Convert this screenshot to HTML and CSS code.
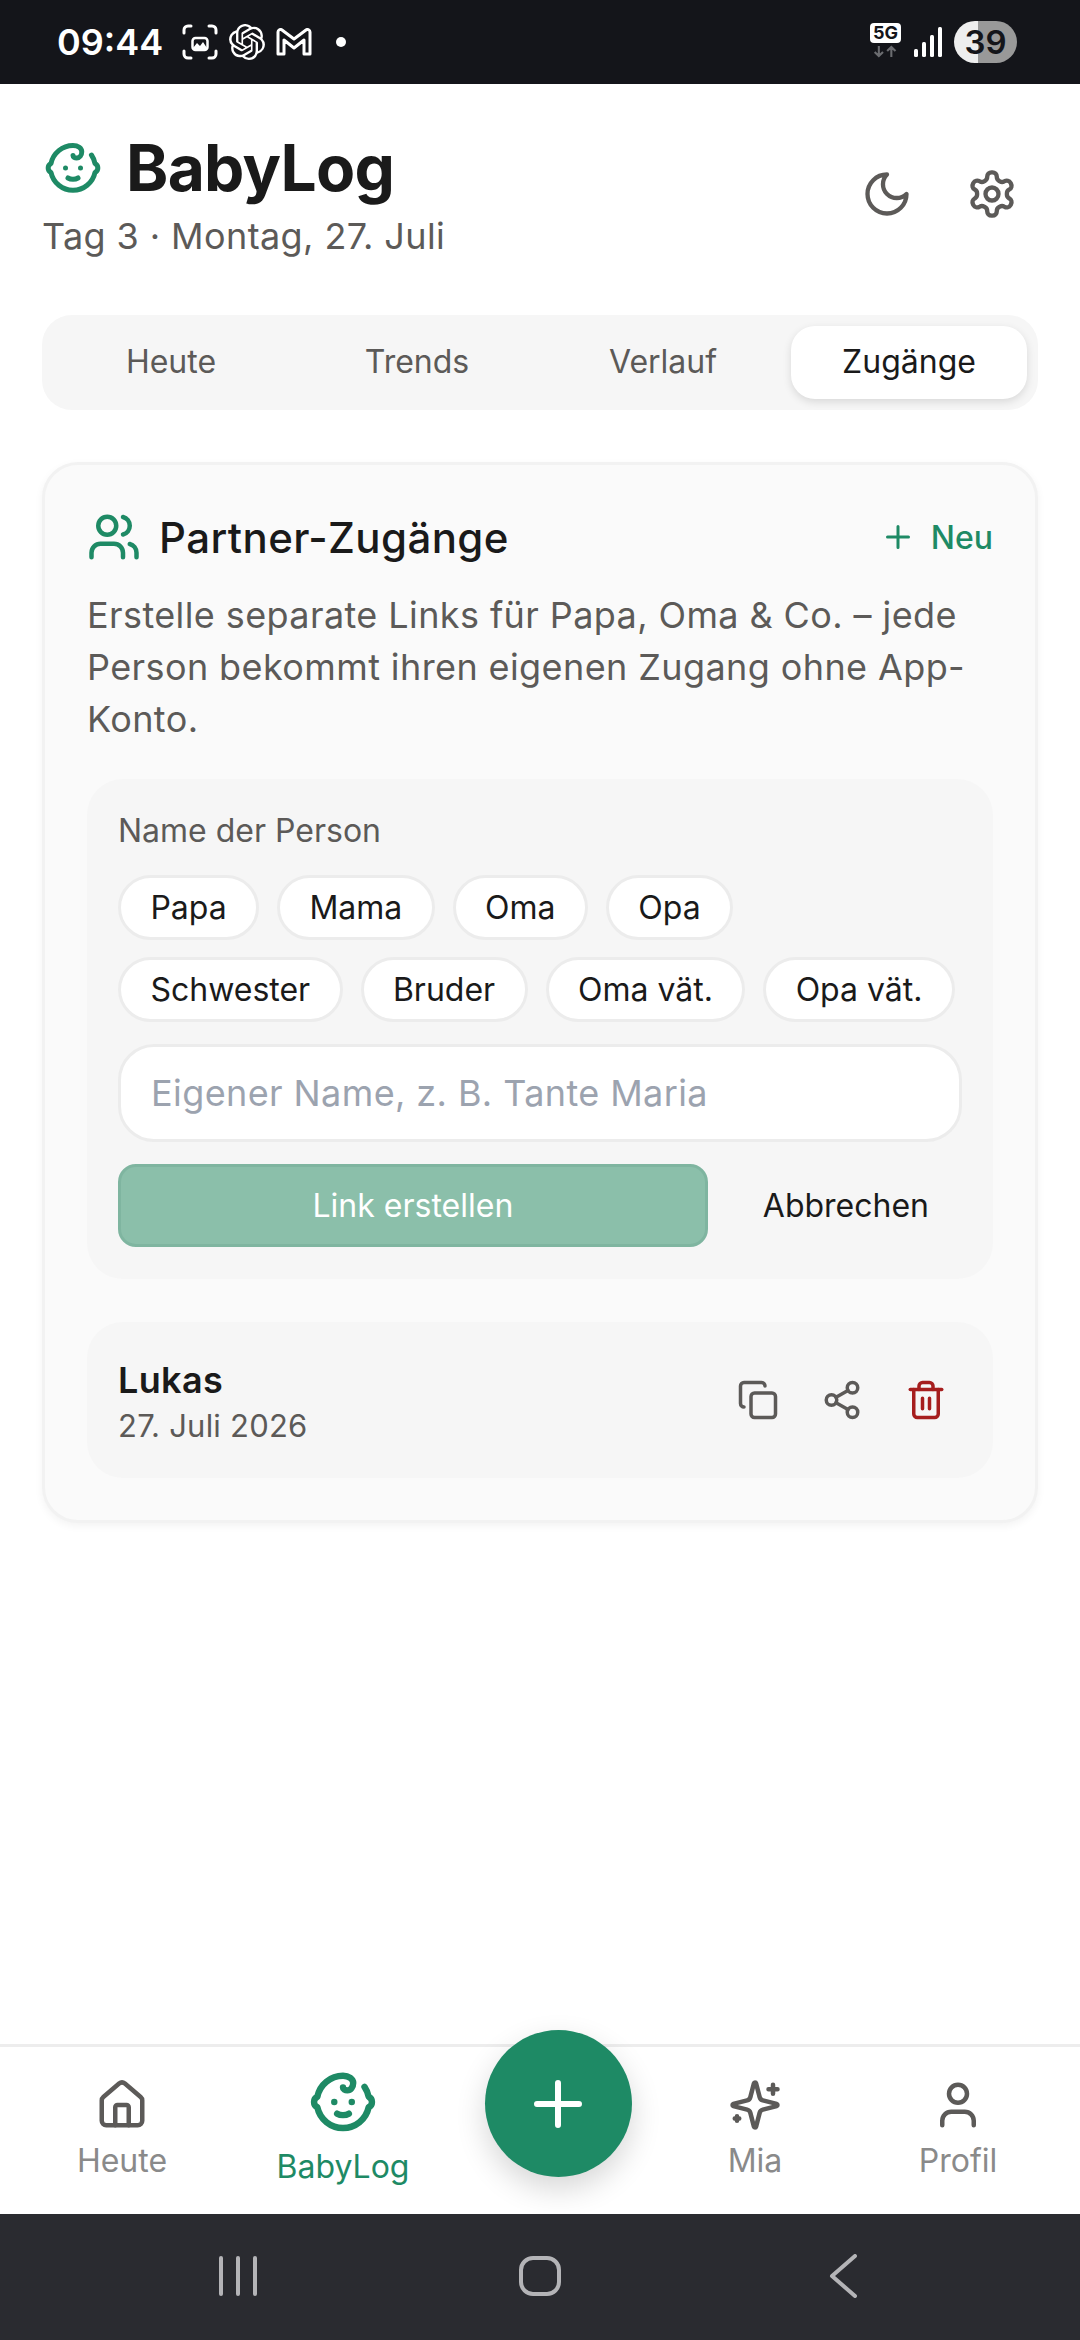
FILE: index.html
```html
<!DOCTYPE html>
<html lang="de">

<head>
    <meta charset="UTF-8">
    <meta name="viewport" content="width=device-width, initial-scale=1.0">
    <title>BabyLog</title>
    <link rel="stylesheet" href="styles.css">
</head>

<body>
    <svg class="defs" width="0" height="0">
        <symbol id="i-baby" viewBox="0 0 24 24">
            <path d="M10 16c.5.3 1.2.5 2 .5s1.5-.2 2-.5" />
            <path d="M15 12h.01" />
            <path d="M19.38 6.813A9 9 0 0 1 20.8 10.2a2 2 0 0 1 0 3.6 9 9 0 0 1-17.6 0 2 2 0 0 1 0-3.6A9 9 0 0 1 12 3c2 0 3.5 1.1 3.5 2.5s-.9 2.5-2 2.5c-.8 0-1.5-.4-1.5-1" />
            <path d="M9 12h.01" />
        </symbol>
    </svg>

    <!-- phone status bar -->
    <div class="statusbar">
        <span class="clock">09:44</span>
        <svg class="st-shot" viewBox="0 0 36 36" fill="none" stroke="#fff" stroke-width="3" stroke-linecap="round">
            <path d="M2 9V6a4 4 0 0 1 4-4h3M27 2h3a4 4 0 0 1 4 4v3M34 27v3a4 4 0 0 1-4 4h-3M9 34H6a4 4 0 0 1-4-4v-3" />
            <rect x="10.500" y="14" width="15" height="12" rx="3" stroke-width="2.500" />
            <path d="M11 24l4-5 3 3 3-4 4 6v2H11z" fill="#fff" stroke="none" />
        </svg>
        <svg class="st-gpt" viewBox="0 0 24 24" fill="#fff">
            <path d="M22.2819 9.8211a5.9847 5.9847 0 0 0-.5157-4.9108 6.0462 6.0462 0 0 0-6.5098-2.9A6.0651 6.0651 0 0 0 4.9807 4.1818a5.9847 5.9847 0 0 0-3.9977 2.9 6.0462 6.0462 0 0 0 .7427 7.0966 5.98 5.98 0 0 0 .511 4.9107 6.051 6.051 0 0 0 6.5146 2.9001A5.9847 5.9847 0 0 0 13.2599 24a6.0557 6.0557 0 0 0 5.7718-4.2058 5.9894 5.9894 0 0 0 3.9977-2.9001 6.0557 6.0557 0 0 0-.7475-7.0729zm-9.022 12.6081a4.4755 4.4755 0 0 1-2.8764-1.0408l.1419-.0804 4.7783-2.7582a.7948.7948 0 0 0 .3927-.6813v-6.7369l2.02 1.1686a.071.071 0 0 1 .038.052v5.5826a4.504 4.504 0 0 1-4.4945 4.4944zm-9.6607-4.1254a4.4708 4.4708 0 0 1-.5346-3.0137l.142.0852 4.783 2.7582a.7712.7712 0 0 0 .7806 0l5.8428-3.3685v2.3324a.0804.0804 0 0 1-.0332.0615L9.74 19.9502a4.4992 4.4992 0 0 1-6.1408-1.6464zM2.3408 7.8956a4.485 4.485 0 0 1 2.3655-1.9728V11.6a.7664.7664 0 0 0 .3879.6765l5.8144 3.3543-2.0201 1.1685a.0757.0757 0 0 1-.071 0l-4.8303-2.7865A4.504 4.504 0 0 1 2.3408 7.872zm16.5963 3.8558L13.1038 8.364 15.1192 7.2a.0757.0757 0 0 1 .071 0l4.8303 2.7913a4.4944 4.4944 0 0 1-.6765 8.1042v-5.6772a.79.79 0 0 0-.407-.667zm2.0107-3.0231l-.142-.0852-4.7735-2.7818a.7759.7759 0 0 0-.7854 0L9.409 9.2297V6.8974a.0662.0662 0 0 1 .0284-.0615l4.8303-2.7866a4.4992 4.4992 0 0 1 6.6802 4.66zM8.3065 12.863l-2.02-1.1638a.0804.0804 0 0 1-.038-.0567V6.0742a4.4992 4.4992 0 0 1 7.3757-3.4537l-.142.0805L8.704 5.459a.7948.7948 0 0 0-.3927.6813zm1.0976-2.3654l2.602-1.4998 2.6069 1.4998v2.9994l-2.5974 1.4997-2.6067-1.4997Z" />
        </svg>
        <svg class="st-mail" viewBox="0 0 36 28" fill="none" stroke="#fff" stroke-width="3" stroke-linejoin="round">
            <path d="M2 4a2.500 2.500 0 0 1 4-2l12 9 12-9a2.500 2.500 0 0 1 4 2v22h-6V12l-10 8-10-8v14H2z" />
        </svg>
        <span class="st-dot"></span>
        <span class="st-space"></span>
        <div class="st-net">
            <span class="st-5g">5G</span>
            <svg class="st-arrows" viewBox="0 0 30 13" fill="none" stroke="#6b6c70" stroke-width="2.500">
                <path d="M7 0v11M2 7l5 5 5-5M22 13V2M17 6l5-5 5 5" />
            </svg>
        </div>
        <svg class="st-signal" viewBox="0 0 28 30" fill="#fff">
            <rect x="0" y="22" width="4" height="8" rx="1.500" />
            <rect x="8" y="15" width="4" height="15" rx="1.500" />
            <rect x="16" y="8" width="4" height="22" rx="1.500" />
            <rect x="24" y="0" width="4" height="30" rx="1.500" />
        </svg>
        <span class="st-battery">39</span>
    </div>

    <main class="content">
        <header class="top">
            <div class="top-text">
                <h1 class="brand">
                    <svg class="icon icon-brand"><use href="#i-baby" /></svg>
                    BabyLog
                </h1>
                <p class="brand-sub">Tag 3 · Montag, 27. Juli</p>
            </div>
            <div class="top-actions">
                <svg class="icon icon-top" viewBox="0 0 24 24">
                    <path d="M12 3a6 6 0 0 0 9 9 9 9 0 1 1-9-9Z" />
                </svg>
                <svg class="icon icon-top" viewBox="0 0 24 24">
                    <path d="M12.22 2h-.44a2 2 0 0 0-2 2v.18a2 2 0 0 1-1 1.73l-.43.25a2 2 0 0 1-2 0l-.15-.08a2 2 0 0 0-2.73.73l-.22.38a2 2 0 0 0 .73 2.73l.15.1a2 2 0 0 1 1 1.72v.51a2 2 0 0 1-1 1.74l-.15.09a2 2 0 0 0-.73 2.73l.22.38a2 2 0 0 0 2.73.73l.15-.08a2 2 0 0 1 2 0l.43.25a2 2 0 0 1 1 1.73V20a2 2 0 0 0 2 2h.44a2 2 0 0 0 2-2v-.18a2 2 0 0 1 1-1.73l.43-.25a2 2 0 0 1 2 0l.15.08a2 2 0 0 0 2.73-.73l.22-.39a2 2 0 0 0-.73-2.73l-.15-.08a2 2 0 0 1-1-1.74v-.5a2 2 0 0 1 1-1.74l.15-.09a2 2 0 0 0 .73-2.73l-.22-.38a2 2 0 0 0-2.73-.73l-.15.08a2 2 0 0 1-2 0l-.43-.25a2 2 0 0 1-1-1.73V4a2 2 0 0 0-2-2z" />
                    <circle cx="12" cy="12" r="3" />
                </svg>
            </div>
        </header>

        <div class="tabs">
            <span class="tab">Heute</span>
            <span class="tab">Trends</span>
            <span class="tab">Verlauf</span>
            <span class="tab active">Zugänge</span>
        </div>

        <section class="card">
            <div class="card-head">
                <svg class="icon icon-users" viewBox="0 0 24 24">
                    <path d="M16 21v-2a4 4 0 0 0-4-4H6a4 4 0 0 0-4 4v2" />
                    <circle cx="9" cy="7" r="4" />
                    <path d="M22 21v-2a4 4 0 0 0-3-3.87" />
                    <path d="M16 3.13a4 4 0 0 1 0 7.75" />
                </svg>
                <h2 class="card-title">Partner-Zugänge</h2>
                <button class="new-btn">
                    <svg class="icon icon-new" viewBox="0 0 24 24"><path d="M5 12h14M12 5v14" /></svg>
                    Neu
                </button>
            </div>
            <p class="card-text">Erstelle separate Links für Papa, Oma &amp; Co. – jede Person bekommt ihren eigenen Zugang ohne App-Konto.</p>

            <div class="form">
                <label class="form-label">Name der Person</label>
                <div class="chips">
                    <button class="chip">Papa</button>
                    <button class="chip">Mama</button>
                    <button class="chip">Oma</button>
                    <button class="chip">Opa</button>
                    <button class="chip">Schwester</button>
                    <button class="chip">Bruder</button>
                    <button class="chip">Oma vät.</button>
                    <button class="chip">Opa vät.</button>
                </div>
                <input class="name-input" type="text" placeholder="Eigener Name, z. B. Tante Maria">
                <div class="form-buttons">
                    <button class="create-btn">Link erstellen</button>
                    <button class="cancel-btn">Abbrechen</button>
                </div>
            </div>

            <div class="person">
                <div class="person-info">
                    <div class="person-name">Lukas</div>
                    <div class="person-date">27. Juli 2026</div>
                </div>
                <button class="row-btn">
                    <svg class="icon icon-row" viewBox="0 0 24 24">
                        <rect width="14" height="14" x="8" y="8" rx="2" ry="2" />
                        <path d="M4 16c-1.100 0-2-.9-2-2V4c0-1.100.9-2 2-2h10c1.100 0 2 .9 2 2" />
                    </svg>
                </button>
                <button class="row-btn">
                    <svg class="icon icon-row" viewBox="0 0 24 24">
                        <circle cx="18" cy="5" r="3" />
                        <circle cx="6" cy="12" r="3" />
                        <circle cx="18" cy="19" r="3" />
                        <path d="M8.590 13.510l6.830 3.980M15.410 6.510l-6.820 3.980" />
                    </svg>
                </button>
                <button class="row-btn">
                    <svg class="icon icon-row danger" viewBox="0 0 24 24">
                        <path d="M3 6h18" />
                        <path d="M19 6v14c0 1-1 2-2 2H7c-1 0-2-1-2-2V6" />
                        <path d="M8 6V4c0-1 1-2 2-2h4c1 0 2 1 2 2v2" />
                        <path d="M10 11v6M14 11v6" />
                    </svg>
                </button>
            </div>
        </section>
    </main>

    <!-- bottom tab bar -->
    <nav class="bottomnav">
        <div class="nav-item">
            <svg class="icon icon-nav" viewBox="0 0 24 24">
                <path d="M15 21v-8a1 1 0 0 0-1-1h-4a1 1 0 0 0-1 1v8" />
                <path d="M3 10a2 2 0 0 1 .709-1.528l7-5.999a2 2 0 0 1 2.582 0l7 5.999A2 2 0 0 1 21 10v9a2 2 0 0 1-2 2H5a2 2 0 0 1-2-2z" />
            </svg>
            <span>Heute</span>
        </div>
        <div class="nav-item active">
            <svg class="icon icon-nav-active"><use href="#i-baby" /></svg>
            <span>BabyLog</span>
        </div>
        <div class="nav-fab">
            <button class="fab">
                <svg class="icon icon-fab" viewBox="0 0 24 24"><path d="M5 12h14M12 5v14" /></svg>
            </button>
        </div>
        <div class="nav-item">
            <svg class="icon icon-nav" viewBox="0 0 24 24">
                <path d="M9.937 15.500A2 2 0 0 0 8.500 14.063l-6.135-1.582a.5.5 0 0 1 0-.962L8.500 9.936A2 2 0 0 0 9.937 8.500l1.582-6.135a.5.5 0 0 1 .963 0L14.063 8.500A2 2 0 0 0 15.500 9.937l6.135 1.581a.5.5 0 0 1 0 .964L15.500 14.063a2 2 0 0 0-1.437 1.437l-1.582 6.135a.5.5 0 0 1-.963 0z" />
                <path d="M20 3v4M22 5h-4M4 17v2M5 18H3" />
            </svg>
            <span>Mia</span>
        </div>
        <div class="nav-item">
            <svg class="icon icon-nav" viewBox="0 0 24 24">
                <path d="M19 21v-2a4 4 0 0 0-4-4H9a4 4 0 0 0-4 4v2" />
                <circle cx="12" cy="7" r="4" />
            </svg>
            <span>Profil</span>
        </div>
    </nav>

    <!-- android system buttons -->
    <div class="sysbar">
        <svg class="sys-recent" viewBox="0 0 38 40" fill="#b4b4b7">
            <rect x="0" y="0" width="4" height="40" rx="2" />
            <rect x="17" y="0" width="4" height="40" rx="2" />
            <rect x="34" y="0" width="4" height="40" rx="2" />
        </svg>
        <span class="sys-home"></span>
        <svg class="sys-back" viewBox="0 0 28 44" fill="none" stroke="#b4b4b7" stroke-width="4" stroke-linecap="round" stroke-linejoin="round">
            <path d="M26 2L3 22l23 20" />
        </svg>
    </div>
</body>

</html>
```

FILE: styles.css
```css
* {
    box-sizing: border-box;
}

body {
    margin: 0;
    width: 1080px;
    height: 2340px;
    display: flex;
    flex-direction: column;
    overflow: hidden;
    background: #fff;
    color: #1a1a1a;
    font-family: Inter, "Noto Sans", sans-serif;
}

button {
    font-family: inherit;
    border: 0;
    background: none;
    padding: 0;
    color: inherit;
}

.defs {
    position: absolute;
}

.icon {
    display: block;
    flex: none;
    fill: none;
    stroke: #5c5a58;
    stroke-width: 2;
    stroke-linecap: round;
    stroke-linejoin: round;
}

/* status bar */
.statusbar {
    height: 84px;
    flex: none;
    display: flex;
    align-items: center;
    padding: 0 63px 0 57px;
    background: #14151a;
    color: #fff;
}

.clock {
    font-size: 36px;
    font-weight: 600;
    width: 125px;
}

.st-shot {
    width: 36px;
    height: 36px;
}

.st-gpt {
    width: 36px;
    height: 36px;
    margin-left: 11px;
}

.st-mail {
    width: 36px;
    height: 28px;
    margin-left: 11px;
}

.st-dot {
    width: 10px;
    height: 10px;
    margin-left: 24px;
    border-radius: 50%;
    background: #fff;
}

.st-space {
    flex: 1;
}

.st-net {
    width: 31px;
    margin-bottom: 4px;
}

.st-5g {
    display: block;
    height: 20px;
    border-radius: 4px;
    background: #fff;
    color: #14151a;
    font-size: 18px;
    font-weight: 700;
    line-height: 20px;
    text-align: center;
}

.st-arrows {
    display: block;
    width: 25px;
    height: 13px;
    margin: 2px auto 0;
}

.st-signal {
    width: 28px;
    height: 30px;
    margin-left: 13px;
}

.st-battery {
    width: 63px;
    height: 42px;
    margin-left: 12px;
    border-radius: 21px;
    background: linear-gradient(90deg, #eeeeee 38%, #999999 38%);
    color: #14151a;
    font-size: 33px;
    font-weight: 600;
    line-height: 42px;
    text-align: center;
}

/* page */
.content {
    flex: 1;
    padding: 48px 42px 0;
}

.top {
    display: flex;
    justify-content: space-between;
    align-items: center;
    margin-bottom: 54px;
}

.brand {
    display: flex;
    align-items: center;
    gap: 23px;
    margin: 0;
    font-size: 64px;
    font-weight: 700;
    letter-spacing: -0.7px;
    line-height: 72px;
}

.icon-brand {
    width: 60px;
    height: 60px;
    stroke: #1e8a65;
    margin-left: 1px;
}

.brand-sub {
    margin: 7px 0 0;
    font-size: 36px;
    letter-spacing: 0.4px;
    line-height: 50px;
    color: #5c5a58;
}

.top-actions {
    display: flex;
    gap: 53px;
    padding-right: 20px;
    margin-bottom: 5px;
}

.icon-top {
    width: 52px;
    height: 52px;
}

.tabs {
    display: grid;
    grid-template-columns: repeat(4, 1fr);
    gap: 10px;
    height: 95px;
    padding: 11px;
    margin-bottom: 52px;
    border-radius: 30px;
    background: #f6f6f6;
}

.tab {
    display: flex;
    align-items: center;
    justify-content: center;
    padding-bottom: 2px;
    border-radius: 24px;
    font-size: 32px;
    color: #5c5a58;
}

.tab.active {
    background: #fff;
    color: #1a1a1a;
    box-shadow: 0 3px 9px rgba(0, 0, 0, 0.12);
}

.card {
    padding: 42px 42px 42px;
    border: 3px solid #f2f2f2;
    border-radius: 36px;
    background: #fafafa;
    box-shadow: 0 3px 9px rgba(0, 0, 0, 0.05);
}

.card-head {
    display: flex;
    align-items: center;
    height: 60px;
}

.icon-users {
    width: 54px;
    height: 54px;
    margin-right: 18px;
    stroke: #1e8a65;
}

.card-title {
    flex: 1;
    margin: 0;
    font-size: 42px;
    font-weight: 450;
    letter-spacing: 0.4px;
}

.new-btn {
    display: flex;
    align-items: center;
    gap: 15px;
    font-size: 32px;
    font-weight: 450;
    color: #1e8a65;
}

.icon-new {
    width: 36px;
    height: 36px;
    stroke: #1e8a65;
}

.card-text {
    margin: 22px 0 0;
    font-size: 36px;
    letter-spacing: 0.4px;
    line-height: 52px;
    color: #5c5a58;
}

.form {
    margin-top: 34px;
    padding: 30px 31px 32px;
    border-radius: 36px;
    background: #f6f6f6;
}

.form-label {
    display: block;
    font-size: 32px;
    line-height: 44px;
    color: #5c5a58;
}

.chips {
    display: flex;
    flex-wrap: wrap;
    gap: 17px 18px;
    margin-top: 22px;
}

.chip {
    height: 65px;
    padding: 0 29.4px;
    border: 3px solid #ececec;
    border-radius: 33px;
    background: #fff;
    font-size: 32px;
}

.name-input {
    display: block;
    width: 100%;
    height: 98px;
    margin-top: 22px;
    padding: 0 30px;
    border: 3px solid #ececec;
    border-radius: 36px;
    background: #fff;
    font-family: inherit;
    font-size: 36px;
    letter-spacing: 0.4px;
}

.name-input::placeholder {
    color: #9ca3af;
    opacity: 1;
}

.form-buttons {
    display: flex;
    gap: 22px;
    margin-top: 22px;
}

.create-btn {
    flex: 1;
    height: 83px;
    border: 3px solid #7fb5a0;
    border-radius: 18px;
    background: #8bbfaa;
    color: #fff;
    font-size: 32px;
}

.cancel-btn {
    padding: 0 33px;
    font-size: 32px;
}

.person {
    display: flex;
    align-items: center;
    gap: 6px;
    height: 156px;
    margin-top: 43px;
    padding: 0 28px 0 31px;
    border-radius: 36px;
    background: #f6f6f6;
}

.person-info {
    flex: 1;
    padding-top: 6px;
}

.person-name {
    font-size: 36px;
    font-weight: 600;
    letter-spacing: 0.36px;
    line-height: 46px;
}

.person-date {
    font-size: 31px;
    letter-spacing: 0.23px;
    line-height: 46px;
    color: #5c5a58;
}

.row-btn {
    padding: 18px;
}

.icon-row {
    width: 42px;
    height: 42px;
}

.icon-row.danger {
    stroke: #a61e1e;
}

/* bottom nav */
.bottomnav {
    flex: none;
    display: grid;
    grid-template-columns: 244px 198px 232px 162px 244px;
    height: 170px;
    border-top: 3px solid #ededed;
    background: #fff;
}

.nav-item {
    display: flex;
    flex-direction: column;
    align-items: center;
    padding-top: 31px;
    font-size: 32px;
    line-height: 46px;
    color: #8a8a8a;
}

.nav-item.active {
    padding-top: 20px;
    color: #1e8a65;
}

.icon-nav {
    width: 54px;
    height: 54px;
    margin-bottom: 6px;
}

.icon-nav-active {
    width: 70px;
    height: 70px;
    stroke: #1e8a65;
    stroke-width: 2.2;
    margin-bottom: 7px;
}

.nav-fab {
    display: flex;
    justify-content: center;
}

.fab {
    display: flex;
    align-items: center;
    justify-content: center;
    width: 147px;
    height: 147px;
    margin-top: -17px;
    border-radius: 50%;
    background: #1e8a65;
    box-shadow: 0 12px 30px rgba(0, 0, 0, 0.16);
}

.icon-fab {
    width: 72px;
    height: 72px;
    stroke: #fff;
}

/* system bar */
.sysbar {
    flex: none;
    position: relative;
    height: 126px;
    background: #2a2b30;
}

.sys-recent,
.sys-home,
.sys-back {
    position: absolute;
    top: 42px;
}

.sys-recent {
    left: 219px;
    width: 38px;
    height: 40px;
}

.sys-home {
    left: 519px;
    width: 42px;
    height: 40px;
    border: 4px solid #b4b4b7;
    border-radius: 14px;
}

.sys-back {
    left: 829px;
    top: 40px;
    width: 28px;
    height: 44px;
}
```
